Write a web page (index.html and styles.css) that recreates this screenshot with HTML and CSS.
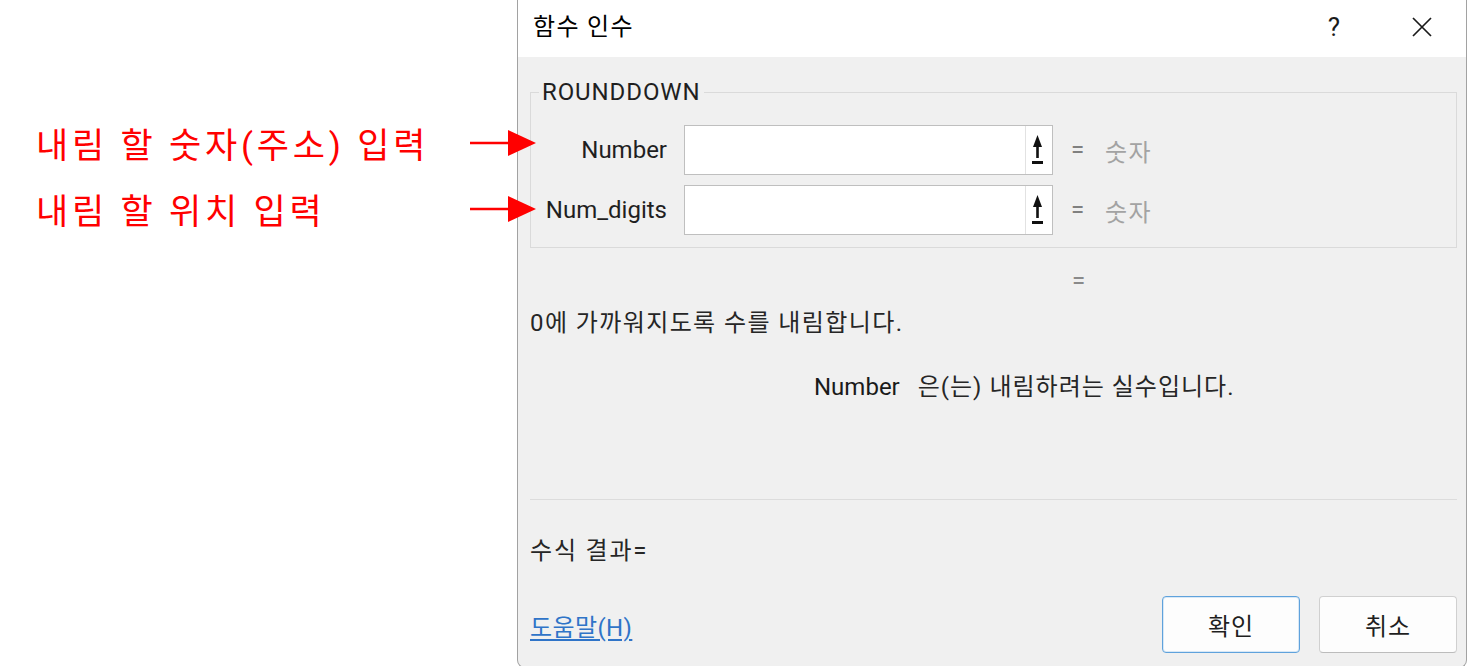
FILE: index.html
```html
<!DOCTYPE html>
<html lang="ko">
<head>
<meta charset="utf-8">
<title>함수 인수</title>
<link rel="stylesheet" href="styles.css">
</head>
<body>
<div class="page">
  <div class="notes">
    <div class="note">
      <span class="note-text">내림 할 숫자(주소) 입력</span>
      <svg class="arrow" viewBox="0 0 67 30" width="67" height="30"><line x1="0" y1="15" x2="40" y2="15" stroke="#ff0000" stroke-width="2.5"/><polygon points="38,2 66,15 38,28" fill="#ff0000"/></svg>
    </div>
    <div class="note">
      <span class="note-text">내림 할 위치 입력</span>
      <svg class="arrow" viewBox="0 0 67 30" width="67" height="30"><line x1="0" y1="15" x2="40" y2="15" stroke="#ff0000" stroke-width="2.5"/><polygon points="38,2 66,15 38,28" fill="#ff0000"/></svg>
    </div>
  </div>

  <div class="dialog">
    <div class="titlebar">
      <div class="title">함수 인수</div>
      <div class="tb-buttons">
        <div class="tb-btn help">?</div>
        <div class="tb-btn close">
          <svg viewBox="0 0 20 20" width="20" height="20"><path d="M1 1 L19 19 M19 1 L1 19" stroke="#1a1a1a" stroke-width="1.7" fill="none"/></svg>
        </div>
      </div>
    </div>

    <div class="body">
      <fieldset class="args">
        <legend>ROUNDDOWN</legend>
        <div class="arg-grid">
          <label class="arg-label">Number</label>
          <div class="field">
            <span class="field-text"></span>
            <span class="ref-btn"><svg viewBox="0 0 27 48" width="27" height="48"><polygon points="11.5,9 7,21 16,21" fill="#111"/><rect x="10.2" y="19" width="2.6" height="13" fill="#111"/><rect x="6" y="35" width="11" height="3" fill="#111"/></svg></span>
          </div>
          <span class="eq">=</span>
          <span class="val">숫자</span>

          <label class="arg-label">Num_digits</label>
          <div class="field">
            <span class="field-text"></span>
            <span class="ref-btn"><svg viewBox="0 0 27 48" width="27" height="48"><polygon points="11.5,9 7,21 16,21" fill="#111"/><rect x="10.2" y="19" width="2.6" height="13" fill="#111"/><rect x="6" y="35" width="11" height="3" fill="#111"/></svg></span>
          </div>
          <span class="eq">=</span>
          <span class="val">숫자</span>
        </div>
      </fieldset>

      <div class="result-eq">=</div>
      <div class="desc">0에 가까워지도록 수를 내림합니다.</div>
      <div class="arg-desc"><span class="arg-name">Number</span><span class="arg-text">은(는) 내림하려는 실수입니다.</span></div>
      <div class="sep"></div>
      <div class="formula">수식 결과=</div>
      <div class="footer">
        <a class="help-link" href="#">도움말(H)</a>
        <div class="buttons">
          <button class="btn primary">확인</button>
          <button class="btn">취소</button>
        </div>
      </div>
    </div>
  </div>
</div>
</body>
</html>
```

FILE: styles.css
```css
html, body {
  margin: 0;
  padding: 0;
  height: 666px;
  overflow: hidden;
  background: #ffffff;
}

body {
  font-family: Roboto, "Noto Sans CJK KR", sans-serif;
  font-size: 24px;
  color: #1f1f1f;
}

.page {
  display: flex;
  align-items: flex-start;
}

/* annotations */
.notes {
  position: relative;
  z-index: 1;
  width: 517px;
  flex: 0 0 517px;
  padding-top: 122px;
  padding-left: 36px;
  box-sizing: border-box;
  display: flex;
  flex-direction: column;
  gap: 16px;
}

.note {
  display: grid;
  grid-template-columns: 434px 67px;
  height: 50px;
  align-items: start;
}

.note-text {
  font-size: 35px;
  letter-spacing: 3.8px;
  line-height: 50px;
  color: #ff0000;
  white-space: nowrap;
}

.arrow {
  display: block;
  margin-top: 6px;
}

/* dialog */
.dialog {
  width: 950px;
  flex: 0 0 950px;
  height: 668px;
  box-sizing: border-box;
  border: 1px solid #a2a2a2;
  border-top: none;
  border-radius: 0 0 8px 8px;
  background: #f0f0f0;
  overflow: hidden;
}

.titlebar {
  height: 57px;
  background: #ffffff;
  display: flex;
  align-items: center;
  justify-content: space-between;
}

.title {
  padding-left: 15px;
  color: #000000;
  line-height: 32px;
  padding-bottom: 3px;
  letter-spacing: 1.3px;
}

.tb-buttons {
  display: flex;
  height: 57px;
}

.tb-btn {
  width: 88px;
  height: 57px;
  display: flex;
  align-items: center;
  justify-content: center;
}

.help {
  font-size: 26px;
  color: #1a1a1a;
  padding-bottom: 3px;
  box-sizing: border-box;
}

.close {
  padding-bottom: 3px;
  box-sizing: border-box;
}

.body {
  padding: 23px 9px 0 12px;
}

.args {
  margin: 0;
  min-width: 0;
  border: 1px solid #dadada;
  padding: 21px 0 12px 0;
}

.args legend {
  margin-left: 8px;
  padding: 0 3px;
  line-height: 24px;
  letter-spacing: 0.9px;
  color: #1f1f1f;
}

.arg-grid {
  display: grid;
  grid-template-columns: 153px 369px 52px auto;
  grid-auto-rows: 50px;
  row-gap: 10px;
  align-items: center;
}

.arg-label {
  padding-right: 17px;
  text-align: right;
  color: #1f1f1f;
}

.field {
  height: 50px;
  box-sizing: border-box;
  border: 1px solid #bfbfbf;
  background: #ffffff;
  display: flex;
}

.field-text {
  flex: 1;
}

.ref-btn {
  width: 27px;
  height: 48px;
  box-sizing: border-box;
  border-left: 1px solid #e2e2e2;
  background: #ffffff;
  display: block;
}

.ref-btn svg {
  display: block;
}

.eq {
  padding-left: 18px;
  color: #808080;
}

.val {
  color: #a3a3a3;
  letter-spacing: 1.3px;
}

.result-eq {
  margin-top: 17px;
  padding-left: 542px;
  line-height: 32px;
  color: #8a8a8a;
}

.desc {
  margin-top: 10px;
  line-height: 32px;
  color: #262626;
  letter-spacing: 1.4px;
}

.arg-desc {
  margin-top: 32px;
  padding-left: 284px;
  line-height: 32px;
  display: flex;
  gap: 18px;
}

.arg-name {
  color: #1a1a1a;
}

.arg-text {
  color: #262626;
  letter-spacing: 1px;
}

.sep {
  margin-top: 96px;
  height: 1px;
  background: #dcdcdc;
}

.formula {
  margin-top: 35px;
  line-height: 32px;
  color: #262626;
  letter-spacing: 1.8px;
}

.footer {
  margin-top: 29px;
  display: flex;
  justify-content: space-between;
  align-items: center;
}

.help-link {
  color: #2f74c8;
  text-decoration: underline;
  text-underline-offset: 3px;
  line-height: 32px;
  margin-top: 7px;
  letter-spacing: 0.4px;
}

.buttons {
  display: flex;
  gap: 19px;
}

.btn {
  width: 138px;
  height: 57px;
  box-sizing: border-box;
  border: 1px solid #d0d0d0;
  border-bottom-color: #bcbcbc;
  border-radius: 4px;
  background: #fdfdfd;
  font-family: Roboto, "Noto Sans CJK KR", sans-serif;
  font-size: 24px;
  letter-spacing: 1px;
  color: #1f1f1f;
  padding: 0;
}

.btn.primary {
  border: 1px solid #5fa2dc;
  box-shadow: inset 0 0 0 1px #d8e8f6;
}
```
